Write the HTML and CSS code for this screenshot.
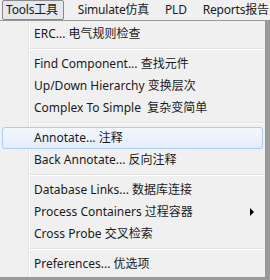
FILE: index.html
```html
<!DOCTYPE html>
<html lang="zh">

<head>
    <meta charset="UTF-8">
    <link rel="stylesheet" href="styles.css">
    <title>Tools</title>
</head>

<body>
    <div class="menubar">
        <span class="top pressed">Tools工具</span>
        <span class="top">Simulate仿真</span>
        <span class="top">PLD</span>
        <span class="top">Reports报告</span>
    </div>
    <div class="dropdown">
        <div class="item">ERC... 电气规则检查</div>
        <div class="sep"></div>
        <div class="item">Find Component... 查找元件</div>
        <div class="item">Up/Down Hierarchy 变换层次</div>
        <div class="item">Complex To Simple&nbsp; 复杂变简单</div>
        <div class="sep"></div>
        <div class="item active">Annotate... 注释</div>
        <div class="item">Back Annotate... 反向注释</div>
        <div class="sep"></div>
        <div class="item">Database Links... 数据库连接</div>
        <div class="item sub">Process Containers 过程容器</div>
        <div class="item">Cross Probe 交叉检索</div>
        <div class="sep"></div>
        <div class="item">Preferences... 优选项</div>
    </div>
</body>

</html>
```

FILE: styles.css
```css
* {
    margin: 0;
    padding: 0;
    box-sizing: border-box;
}

body {
    width: 270px;
    height: 280px;
    background: #9a9a9a;
    font-family: "Noto Sans", "Noto Sans CJK SC", sans-serif;
    font-size: 12px;
    color: #1a1a1a;
    overflow: hidden;
}

.menubar {
    height: 20px;
    background: #f0f0f0;
    display: flex;
    align-items: center;
    padding-left: 2px;
    white-space: nowrap;
    overflow: hidden;
}

.top {
    flex-shrink: 0;
    height: 20px;
    line-height: 18px;
    padding: 0 7px;
    border: 1px solid transparent;
    letter-spacing: -0.2px;
}

.top.pressed {
    border-color: #8a8a8a;
    border-radius: 2px;
    background: #e4e7ec;
    padding: 0 5px 0 3px;
    margin-right: 6px;
}

.dropdown {
    width: 266px;
    background: #f0f0f0 linear-gradient(to right, transparent 28px, #e2e3e3 28px, #e2e3e3 29px, #ffffff 29px, #ffffff 30px, transparent 30px);
    border: 1px solid #979797;
    border-left: none;
    padding: 2px;
}

.item {
    height: 22px;
    line-height: 20px;
    padding-left: 31px;
    border: 1px solid transparent;
    white-space: nowrap;
    position: relative;
}

.item.active {
    border-color: #aeccf1;
    border-radius: 3px;
    background: linear-gradient(#f3f7fd, #e4edfa);
}

.item.sub::after {
    content: "";
    position: absolute;
    right: 8px;
    top: 6px;
    border-left: 4px solid #000;
    border-top: 4px solid transparent;
    border-bottom: 4px solid transparent;
}

.sep {
    height: 8px;
    margin-left: 28px;
    background: linear-gradient(transparent 3px, #e0e0e0 3px, #e0e0e0 4px, #ffffff 4px, #ffffff 5px, transparent 5px);
}
```
